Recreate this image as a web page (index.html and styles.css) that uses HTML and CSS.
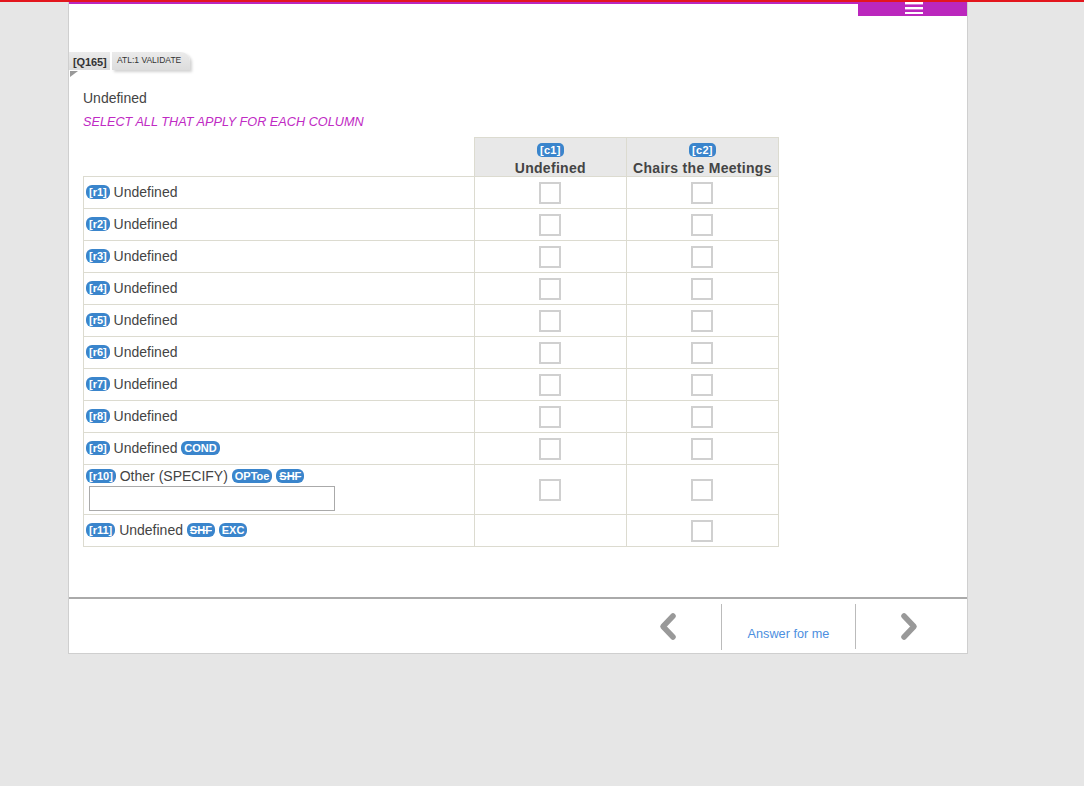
FILE: index.html
```html
<!DOCTYPE html>
<html>
<head>
<meta charset="utf-8">
<title>Survey</title>
<link rel="stylesheet" href="styles.css">
</head>
<body>
<div class="topline"></div>
<div class="page">
  <div class="topbar">
    <button class="menu-btn" aria-label="menu">
      <svg width="18" height="12" viewBox="0 0 18 12"><rect x="0" y="0" width="18" height="2.4" fill="#fff"/><rect x="0" y="5" width="18" height="2.4" fill="#fff"/><rect x="0" y="10" width="18" height="2" fill="#fff"/></svg>
    </button>
  </div>
  <div class="content">
    <div class="tags">
      <span class="tag tag-q">[Q165]</span>
      <span class="tag tag-atl">ATL:1 VALIDATE</span>
    </div>
    <div class="fold"></div>
    <div class="question">Undefined</div>
    <div class="instruction">SELECT ALL THAT APPLY FOR EACH COLUMN</div>
    <table class="grid">
      <thead>
        <tr>
          <th class="blank"></th>
          <th class="col"><span class="badge">[c1]</span><div class="coltext">Undefined</div></th>
          <th class="col"><span class="badge">[c2]</span><div class="coltext">Chairs the Meetings</div></th>
        </tr>
      </thead>
      <tbody>
        <tr><td class="label"><span class="badge">[r1]</span> Undefined</td><td class="cell"><span class="cb"></span></td><td class="cell"><span class="cb"></span></td></tr>
        <tr><td class="label"><span class="badge">[r2]</span> Undefined</td><td class="cell"><span class="cb"></span></td><td class="cell"><span class="cb"></span></td></tr>
        <tr><td class="label"><span class="badge">[r3]</span> Undefined</td><td class="cell"><span class="cb"></span></td><td class="cell"><span class="cb"></span></td></tr>
        <tr><td class="label"><span class="badge">[r4]</span> Undefined</td><td class="cell"><span class="cb"></span></td><td class="cell"><span class="cb"></span></td></tr>
        <tr><td class="label"><span class="badge">[r5]</span> Undefined</td><td class="cell"><span class="cb"></span></td><td class="cell"><span class="cb"></span></td></tr>
        <tr><td class="label"><span class="badge">[r6]</span> Undefined</td><td class="cell"><span class="cb"></span></td><td class="cell"><span class="cb"></span></td></tr>
        <tr><td class="label"><span class="badge">[r7]</span> Undefined</td><td class="cell"><span class="cb"></span></td><td class="cell"><span class="cb"></span></td></tr>
        <tr><td class="label"><span class="badge">[r8]</span> Undefined</td><td class="cell"><span class="cb"></span></td><td class="cell"><span class="cb"></span></td></tr>
        <tr><td class="label"><span class="badge">[r9]</span> Undefined <span class="badge">COND</span></td><td class="cell"><span class="cb"></span></td><td class="cell"><span class="cb"></span></td></tr>
        <tr class="tall"><td class="label label-other"><span class="badge">[r10]</span> Other (SPECIFY) <span class="badge">OPToe</span> <span class="badge strike">SHF</span><input class="specify" type="text"></td><td class="cell"><span class="cb"></span></td><td class="cell"><span class="cb"></span></td></tr>
        <tr><td class="label"><span class="badge">[r11]</span> Undefined <span class="badge strike">SHF</span> <span class="badge">EXC</span></td><td class="cell"></td><td class="cell"><span class="cb"></span></td></tr>
      </tbody>
    </table>
  </div>
  <div class="footer">
    <div class="nav nav-prev">
      <svg class="chev-prev" width="20" height="30" viewBox="0 0 20 30"><polyline points="15,4 5,14.5 15,25" fill="none" stroke="#999" stroke-width="5.5" stroke-linecap="round" stroke-linejoin="round"/></svg>
    </div>
    <div class="nav nav-answer"><a href="#">Answer for me</a></div>
    <div class="nav nav-next">
      <svg class="chev-next" width="20" height="30" viewBox="0 0 20 30"><polyline points="5,4 15,14.5 5,25" fill="none" stroke="#999" stroke-width="5.5" stroke-linecap="round" stroke-linejoin="round"/></svg>
    </div>
  </div>
</div>
</body>
</html>
```

FILE: styles.css
```css
html, body {
  margin: 0;
  padding: 0;
}
body {
  background: #e6e6e6;
  font-family: "Liberation Sans", Arial, sans-serif;
  color: #444;
  min-height: 786px;
}
.topline {
  height: 2px;
  background: #e3161d;
}
.page {
  margin-left: 68px;
  width: 898px;
  background: #fff;
  border-left: 1px solid #cfcfcf;
  border-right: 1px solid #cfcfcf;
  border-bottom: 1px solid #cfcfcf;
}
.topbar {
  height: 2px;
  background: #bb27bd;
  position: relative;
}
.menu-btn {
  position: absolute;
  right: 0;
  top: 0;
  width: 109px;
  height: 14px;
  border: 0;
  padding: 0;
  background: #bb27bd;
  display: flex;
  align-items: flex-start;
  justify-content: center;
}
.menu-btn svg {
  margin-top: 0;
  margin-left: 2px;
}
.content {
  padding: 48px 14px 50px 14px;
}
.tags {
  display: flex;
  margin-left: -14px;
  height: 18px;
  gap: 2px;
}
.tag {
  display: block;
  height: 18px;
  box-sizing: border-box;
  background: linear-gradient(#ebebeb, #dcdcdc);
  color: #333;
}
.tag-q {
  width: 41px;
  font-size: 11px;
  font-weight: bold;
  padding: 4px 0 0 4px;
  letter-spacing: -0.1px;
}
.tag-atl {
  width: 78px;
  font-size: 8.5px;
  padding: 3px 0 0 5px;
  border-top-right-radius: 9px;
  box-shadow: 2px 2px 3px rgba(0,0,0,0.18);
}
.fold {
  width: 0;
  height: 0;
  margin-left: -13px;
  margin-top: 1px;
  border-top: 6px solid #999;
  border-right: 8px solid transparent;
}
.question {
  font-size: 14px;
  margin-top: 13px;
  line-height: 16px;
}
.instruction {
  font-size: 12.7px;
  font-style: italic;
  color: #c02ac4;
  margin-top: 9px;
  line-height: 14px;
}
.grid {
  margin-top: 8px;
  border-collapse: collapse;
  width: 696px;
}
.grid th.blank {
  border: 0;
  width: 390px;
  padding: 0;
}
.grid th.col {
  width: 152px;
  background: #e8e8e8;
  border: 1px solid #dcdbd0;
  padding: 4px 0 0 0;
  font-size: 14px;
  font-weight: bold;
  color: #444;
  height: 35px;
  box-sizing: border-box;
  vertical-align: top;
  letter-spacing: 0.3px;
}
.coltext {
  margin-top: 2px;
  line-height: 16px;
}
.grid td {
  border: 1px solid #dcdbd0;
  height: 31px;
  padding: 0;
}
.grid td.label {
  font-size: 14px;
  padding-left: 2px;
  padding-bottom: 2px;
  vertical-align: middle;
  box-sizing: border-box;
}
.grid tr.tall td {
  height: 49px;
}
.grid td.label-other {
  vertical-align: top;
  padding-top: 3px;
}
.specify {
  display: block;
  width: 246px;
  height: 25px;
  box-sizing: border-box;
  border: 1px solid #aaa;
  margin: 2px 0 0 3px;
  padding: 0;
}
.grid td.cell {
  text-align: center;
  vertical-align: middle;
}
.cb {
  display: inline-block;
  width: 22px;
  height: 22px;
  box-sizing: border-box;
  border: 2px solid #d0d0d0;
  vertical-align: middle;
  background: #fff;
}
.badge {
  display: inline-block;
  background: #3a85cc;
  color: #fff;
  font-size: 11px;
  font-weight: bold;
  line-height: 14px;
  padding: 0 3px;
  border-radius: 5px;
  vertical-align: 1px;
}
.label .badge {
  border-radius: 6px;
}
.strike {
  text-decoration: line-through;
}
.footer {
  border-top: 2px solid #aaa;
  height: 54px;
  display: flex;
  justify-content: flex-end;
  align-items: stretch;
}
.nav {
  display: flex;
  align-items: center;
  justify-content: center;
}
.nav-prev {
  width: 110px;
  border-right: 1px solid #bbb;
  margin: 5px 0 3px 0;
}
.chev-prev {
  margin-left: 4px;
}
.chev-next {
  margin-right: 6px;
}
.nav-answer {
  width: 134px;
  border-right: 1px solid #bbb;
  margin: 5px 0 4px 0;
  padding-top: 14px;
  box-sizing: border-box;
}
.nav-answer a {
  font-size: 12.7px;
  color: #4d8fe0;
  text-decoration: none;
}
.nav-next {
  width: 111px;
  margin: 5px 0 3px 0;
}
```
